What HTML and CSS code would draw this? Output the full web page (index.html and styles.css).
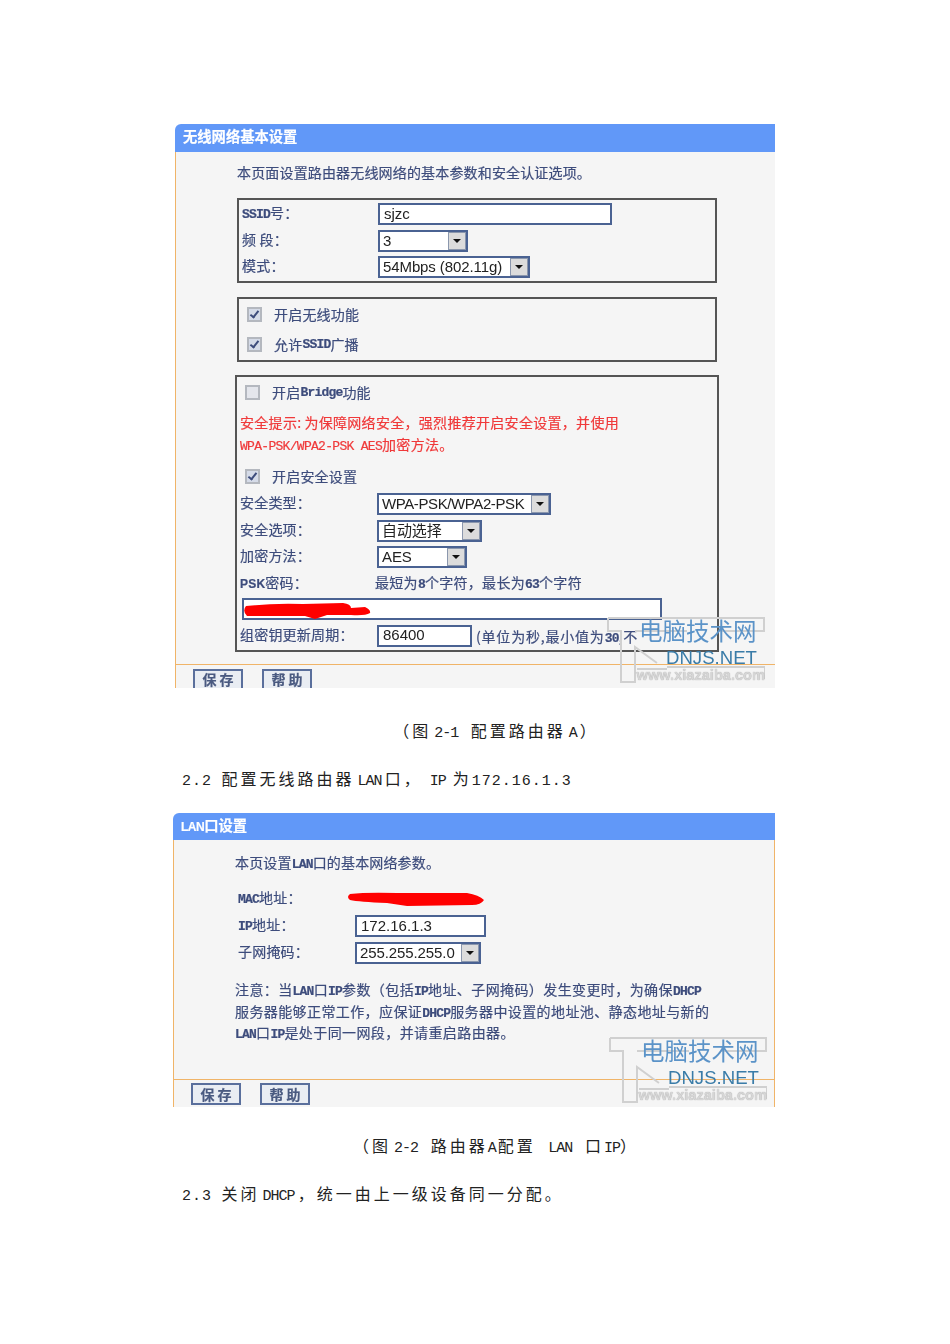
FILE: index.html
```html
<!DOCTYPE html>
<html lang="zh-CN">
<head>
<meta charset="utf-8">
<link rel="stylesheet" href="styles.css">
<title>配置路由器</title>
</head>
<body>
<div id="page">

<div class="fig fig-a">
  <div class="fig-head">无线网络基本设置</div>
  <div class="fig-body">
    <div class="intro">本页面设置路由器无线网络的基本参数和安全认证选项。</div>
    <div class="box box-basic">
      <div class="rows rows-basic">
        <div class="lbl"><span class="lat">SSID</span>号&#xFF1A;</div>
        <div><input class="txt w234" type="text" value="sjzc"></div>
        <div class="lbl">频 段&#xFF1A;</div>
        <div><div class="sel w90"><span class="sel-val">3</span><span class="sel-btn"></span></div></div>
        <div class="lbl">模式&#xFF1A;</div>
        <div><div class="sel w152"><span class="sel-val">54Mbps (802.11g)</span><span class="sel-btn"></span></div></div>
      </div>
    </div>
    <div class="box box-switch">
      <div class="chk-row"><span class="chk on"></span>开启无线功能</div>
      <div class="chk-row"><span class="chk on"></span>允许<span class="lat">SSID</span>广播</div>
    </div>
    <div class="box box-sec">
      <div class="chk-row"><span class="chk"></span>开启<span class="lat">Bridge</span>功能</div>
      <div class="warn">
        安全提示<span class="colon">:</span>为保障网络安全&#xFF0C;强烈推荐开启安全设置&#xFF0C;并使用<br>
        <span class="lat">WPA-PSK/WPA2-PSK AES</span>加密方法。
      </div>
      <div class="chk-row chk-row-sec"><span class="chk on"></span>开启安全设置</div>
      <div class="rows rows-sec">
        <div class="lbl">安全类型&#xFF1A;</div>
        <div><div class="sel w174"><span class="sel-val sel-tight">WPA-PSK/WPA2-PSK</span><span class="sel-btn"></span></div></div>
        <div class="lbl">安全选项&#xFF1A;</div>
        <div><div class="sel w105"><span class="sel-val">自动选择</span><span class="sel-btn"></span></div></div>
        <div class="lbl">加密方法&#xFF1A;</div>
        <div><div class="sel w90"><span class="sel-val">AES</span><span class="sel-btn"></span></div></div>
        <div class="lbl"><span class="lat-s">PSK</span>密码&#xFF1A;</div>
        <div class="hint hint-psk">最短为<span class="lat">8</span>个字符&#xFF0C;最长为<span class="lat">63</span>个字符</div>
      </div>
      <div class="psk">
        <input class="txt w420" type="text" value="">
        <svg class="blot blot-psk" width="128" height="18" viewBox="0 0 128 18"><path d="M3 4 Q30 1 60 2 L100 1 Q108 2 108 6 L122 5 Q128 8 127 11 Q122 14 108 13 L84 13 L72 17 L62 14 L4 14 Q-1 9 3 4Z"/></svg>
      </div>
      <div class="rows rows-rekey">
        <div class="lbl">组密钥更新周期&#xFF1A;</div>
        <div class="ctl-row"><input class="txt w95" type="text" value="86400"><span class="hint">(单位为秒,最小值为<span class="lat">30</span>,不</span></div>
      </div>
    </div>
  </div>
  <div class="fig-foot">
    <div class="btn">保 存</div>
    <div class="btn">帮 助</div>
  </div>
  <div class="mark">
    <svg class="mark-logo" width="158" height="66" viewBox="0 0 158 66"><path d="M1 1 H157 V14 H112 M1 1 V14 H14 V65 H28 V30 L50 46 M28 14 H80 M60 50 H158 V62 M30 52 H60"/></svg>
    <div class="mark-cn">电脑技术网</div>
    <div class="mark-en">DNJS.NET</div>
    <div class="mark-url">www.xiazaiba.com</div>
  </div>
</div>

<p class="doc cap cap-a">&#xFF08;图<span class="lat-w m">2-1</span> 配置路由器<span class="lat-w m">A</span>&#xFF09;</p>
<p class="doc para para-a"><span class="lat-d">2.2</span> 配置无线路由器<span class="lat-w m">LAN</span>口&#xFF0C;<span class="lat-w m-ip">IP</span>为<span class="lat-d">172.16.1.3</span></p>

<div class="fig fig-b">
  <div class="fig-head"><span class="lat-h">LAN</span>口设置</div>
  <div class="fig-body">
    <div class="intro">本页设置<span class="lat">LAN</span>口的基本网络参数。</div>
    <div class="rows rows-lan">
      <div class="lbl"><span class="lat">MAC</span>地址&#xFF1A;</div>
      <div class="mac"><svg class="blot blot-mac" width="138" height="14" viewBox="0 0 138 14"><path d="M3 2 Q20 0 50 1 L120 1 Q132 3 137 8 Q134 13 125 13 L60 14 L40 11 Q12 10 3 8 Q-1 5 3 2Z"/></svg></div>
      <div class="lbl"><span class="lat">IP</span>地址&#xFF1A;</div>
      <div><input class="txt w131" type="text" value="172.16.1.3"></div>
      <div class="lbl">子网掩码&#xFF1A;</div>
      <div><div class="sel w126"><span class="sel-val">255.255.255.0</span><span class="sel-btn"></span></div></div>
    </div>
    <div class="note">
      注意&#xFF1A;当<span class="lat">LAN</span>口<span class="lat">IP</span>参数&#xFF08;包括<span class="lat">IP</span>地址、子网掩码&#xFF09;发生变更时&#xFF0C;为确保<span class="lat">DHCP</span><br>
      服务器能够正常工作&#xFF0C;应保证<span class="lat">DHCP</span>服务器中设置的地址池、静态地址与新的<br>
      <span class="lat">LAN</span>口<span class="lat">IP</span>是处于同一网段&#xFF0C;并请重启路由器。
    </div>
  </div>
  <div class="fig-foot">
    <div class="btn">保 存</div>
    <div class="btn">帮 助</div>
  </div>
  <div class="mark">
    <svg class="mark-logo" width="158" height="66" viewBox="0 0 158 66"><path d="M1 1 H157 V14 H112 M1 1 V14 H14 V65 H28 V30 L50 46 M28 14 H80 M60 50 H158 V62 M30 52 H60"/></svg>
    <div class="mark-cn">电脑技术网</div>
    <div class="mark-en">DNJS.NET</div>
    <div class="mark-url">www.xiazaiba.com</div>
  </div>
</div>

<p class="doc cap cap-b">&#xFF08;图<span class="lat-w m">2-2</span> 路由器<span class="lat-d">A</span>配置 <span class="lat-w m">LAN</span> 口<span class="lat-w">IP</span>&#xFF09;</p>
<p class="doc para para-b"><span class="lat-d">2.3</span> 关闭<span class="lat-w m">DHCP</span>&#xFF0C;统一由上一级设备同一分配。</p>

</div>
</body>
</html>
```

FILE: styles.css
```css
body {
  margin: 0;
  background: #fff;
  font-family: "Noto Sans CJK SC", sans-serif;
}
#page {
  width: 642px;
  padding: 124px 0 0 173px;
}

/* figures */
.fig {
  position: relative;
  display: flex;
  flex-direction: column;
  overflow: hidden;
  box-sizing: border-box;
  color: #3d4c7c;
  font-size: 14px;
  line-height: 22px;
  -webkit-text-stroke: .2px;
  filter: blur(.4px);
}
.fig-a { width: 600px; height: 564px; margin-left: 2px; }
.fig-b { width: 602px; height: 294px; }
.fig-head {
  flex: none;
  height: 28px;
  padding-left: 8px;
  border-top-left-radius: 6px;
  background: #6198f8;
  color: #fff;
  font-weight: 700;
  font-size: 14.3px;
  line-height: 24px;
}
.fig-b .fig-head { height: 27px; line-height: 24px; }
.lat-h { font-family: "Liberation Sans", sans-serif; font-size: 12px; letter-spacing: -.5px; line-height: 1; }
.fig-body {
  flex: 1;
  padding: 9px 0 0 61px;
  background: #f5f5f5;
  border-left: 1px solid #f0b468;
}
.fig-b .fig-body { padding-top: 11px; border-right: 1px solid #f0b468; }
.intro { letter-spacing: .16px; }
.fig-foot {
  flex: none;
  display: flex;
  gap: 19px;
  box-sizing: border-box;
  height: 24px;
  padding: 4px 0 0 17px;
  background: #f5f5f5;
  border-top: 1px solid #f0b468;
  border-left: 1px solid #f0b468;
}
.fig-b .fig-foot { height: 28px; padding-top: 3px; border-right: 1px solid #f0b468; }
.btn {
  flex: none;
  box-sizing: border-box;
  width: 50px;
  height: 22px;
  border: 2px solid #5a6f9c;
  background: #e9edf3;
  text-align: center;
  font-weight: 700;
  font-size: 14px;
  line-height: 18px;
  color: #4a5a80;
}
.fig-a .btn { height: 19px; border-bottom: 0; line-height: 17px; }

/* bordered groups */
.box {
  box-sizing: border-box;
  border: 2px solid #555;
}
.box-basic { width: 480px; height: 85px; margin-top: 15px; padding: 3px 0 0 3px; }
.box-switch { width: 480px; height: 65px; margin-top: 14px; padding-left: 8px; }
.box-sec { width: 484px; height: 277px; margin: 13px 0 0 -2px; padding-left: 3px; }
.rows { display: grid; align-items: center; }
.rows-basic { grid-template-columns: 136px auto; row-gap: 4.5px; }
.rows-sec { grid-template-columns: 137px auto; row-gap: 4.5px; margin-top: 2px; }
.rows-rekey { grid-template-columns: 137px auto; margin-top: 5px; }
.rows-lan { grid-template-columns: 117px auto; row-gap: 5px; margin: 15px 0 0 3px; }
.lbl { height: 22px; line-height: 18px; letter-spacing: .2px; }
.lat { font-family: "Liberation Mono", monospace; font-size: 13px; font-weight: 700; letter-spacing: -.8px; line-height: 1; }
.lat-s { font-family: "Liberation Sans", sans-serif; font-size: 12px; font-weight: 700; line-height: 1; }
.chk-row { display: flex; align-items: center; height: 30px; letter-spacing: .2px; }
.box-sec .chk-row { margin-left: 5px; }
.chk-row-sec { margin-top: 6px; }
.chk {
  position: relative;
  flex: none;
  box-sizing: border-box;
  width: 15px;
  height: 15px;
  margin-right: 12px;
  border: 2px solid #b4b8bf;
  background: #e4e6ec;
}
.chk.on { background: #d5dbe8; }
.chk.on::after {
  content: "";
  position: absolute;
  left: 3px;
  top: 0;
  width: 3px;
  height: 7px;
  border: solid #3d4c7c;
  border-width: 0 2px 2px 0;
  transform: rotate(38deg);
}
.warn { margin-top: 4px; color: #f0393a; letter-spacing: .3px; white-space: nowrap; }
.warn .lat { font-weight: 400; letter-spacing: -.7px; }
.colon { margin-right: 3px; }
.hint { margin-left: -2px; font-size: 14px; white-space: nowrap; }
.hint-psk { height: 22px; line-height: 18px; letter-spacing: .3px; }
.ctl-row { display: flex; align-items: center; gap: 6px; }
.ctl-row .hint { margin-left: -2px; letter-spacing: .8px; }
.psk { position: relative; margin: 3px 0 0 2px; }
.mac { position: relative; height: 22px; }
.blot { position: absolute; fill: #f00; -webkit-text-stroke: 0; }
.blot-psk { left: 1px; top: 4px; }
.blot-mac { left: -8px; top: 4px; }
.note { margin-top: 15px; line-height: 21.5px; letter-spacing: .4px; white-space: nowrap; }

/* form controls */
.txt, .sel {
  box-sizing: border-box;
  height: 22px;
  border: 2px solid #4a6292;
  background: #fff;
  color: #222;
  font-family: "Liberation Sans", "Noto Sans CJK SC", sans-serif;
  font-size: 15px;
  -webkit-text-stroke: 0;
}
.txt { display: block; padding: 0 4px 2px; margin: 0; outline: none; }
.sel { display: flex; align-items: center; justify-content: space-between; padding-left: 3px; }
.sel-val { white-space: nowrap; letter-spacing: -.1px; }
.sel-tight { letter-spacing: -.4px; }
.sel-btn {
  position: relative;
  flex: none;
  width: 18px;
  height: 18px;
  background: #dcdcdc;
  border: 1px solid #8b97ad;
  box-sizing: border-box;
}
.sel-btn::after {
  content: "";
  position: absolute;
  left: 4px;
  top: 6px;
  border: 4px solid transparent;
  border-top: 4px solid #111;
  border-bottom: 0;
}
.w90 { width: 90px; }
.w95 { width: 95px; }
.w105 { width: 105px; }
.w126 { width: 126px; }
.w131 { width: 131px; }
.w152 { width: 152px; }
.w174 { width: 174px; }
.w234 { width: 234px; }
.w420 { width: 420px; }

/* watermark */
.mark {
  position: absolute;
  right: 10px;
  bottom: 5px;
  width: 158px;
  height: 66px;
  -webkit-text-stroke: 0;
}
.fig-b .mark { right: 8px; bottom: 4px; }
.mark-logo {
  position: absolute;
  left: 0;
  top: 0;
  fill: none;
  stroke: #d0d0d0;
  stroke-width: 2;
}
.mark-cn {
  position: absolute;
  left: 32px;
  top: -1px;
  font-size: 23.5px;
  line-height: 28px;
  color: #5b93c8;
  white-space: nowrap;
}
.mark-en {
  position: absolute;
  left: 59px;
  top: 32px;
  font-family: "Liberation Sans", sans-serif;
  font-size: 18.6px;
  line-height: 18px;
  color: #3a7ca8;
}
.mark-url {
  position: absolute;
  right: 0;
  top: 51px;
  font-family: "Liberation Sans", sans-serif;
  font-size: 14.6px;
  line-height: 15px;
  font-weight: 700;
  color: #d6d6d6;
  text-shadow: 0 0 1px #999;
  white-space: nowrap;
}

/* document text */
.doc {
  margin: 0;
  color: #222;
  font-size: 16px;
  line-height: 24px;
  letter-spacing: 3px;
  word-spacing: 3px;
  white-space: nowrap;
}
.lat-d { font-family: "Liberation Mono", monospace; font-size: 15px; letter-spacing: 1px; line-height: 1; }
.lat-w { font-family: "Liberation Mono", monospace; font-size: 15px; letter-spacing: -1px; line-height: 1; }
.m { margin: 0 3px; }
.m-ip { margin: 0 7px; }
.cap { padding-left: 4px; text-align: center; }
.cap-a { margin-top: 30px; }
.para-a { margin: 24px 0 23px 9px; }
.cap-b { margin-top: 26px; }
.para-b { margin: 24px 0 0 9px; }
```
